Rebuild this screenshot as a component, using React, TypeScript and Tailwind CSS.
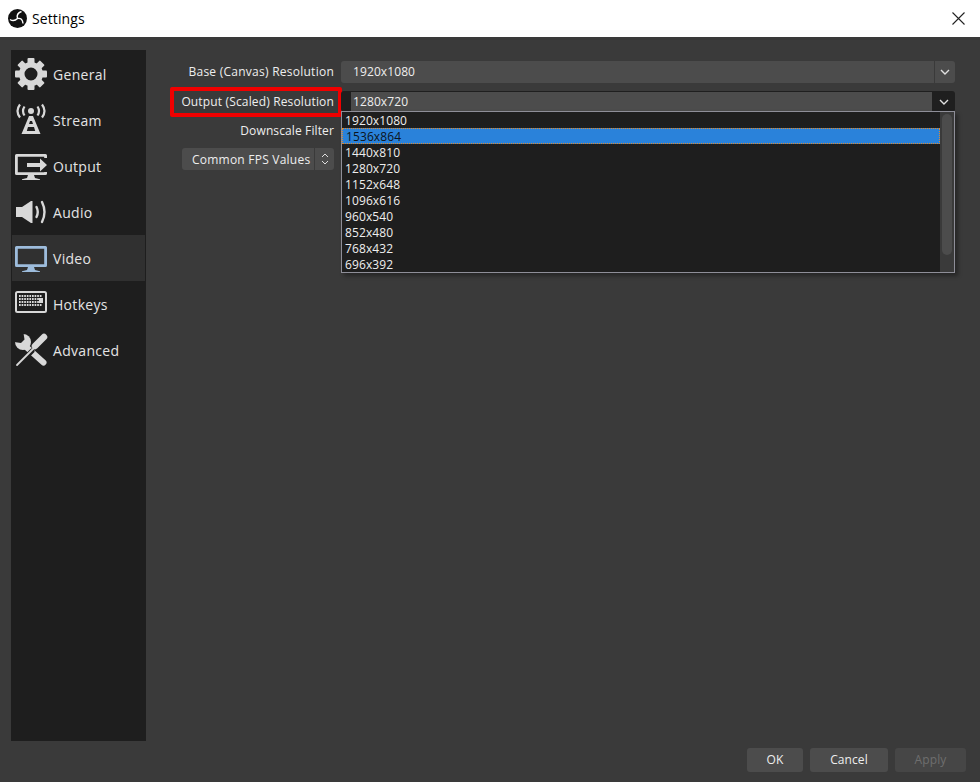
import type { ReactNode } from 'react';

const FONT = "font-['Open_Sans','Noto_Sans',sans-serif]";
const RESOLUTIONS = ['1920x1080', '1536x864', '1440x810', '1280x720', '1152x648', '1096x616', '960x540', '852x480', '768x432', '696x392'];

function Gear() {
  const teeth = [0, 45, 90, 135, 180, 225, 270, 315];
  return (
    <svg width="34" height="34" viewBox="0 0 34 34" fill="currentColor">
      {teeth.map((a) => (
        <rect key={a} x="13.5" y="1" width="7" height="8" rx="1" transform={`rotate(${a} 17 17)`} />
      ))}
      <path fillRule="evenodd" d="M17 5a12 12 0 1 0 0 24a12 12 0 0 0 0-24zM17 10.500a6.500 6.500 0 1 1 0 13a6.500 6.500 0 0 1 0-13z" />
    </svg>
  );
}

function Tower() {
  return (
    <svg width="34" height="34" viewBox="0 0 34 34" fill="none" stroke="currentColor">
      <circle cx="17" cy="8" r="3" fill="currentColor" stroke="none" />
      <path strokeWidth="2.200" d="M10.500 3.500q-3 4.500 0 9M6 1.500q-5 6.500 0 13M23.500 3.500q3 4.500 0 9M28 1.500q5 6.500 0 13" />
      <path fill="currentColor" stroke="none" fillRule="evenodd" d="M15 13h4l7.500 18h-19zM16 18l-1 3h4l-1-3zM14 24l-1.200 4h8.400l-1.200-4z" />
    </svg>
  );
}

function Monitor({ arrow }: { arrow?: boolean }) {
  return (
    <svg width="34" height="34" viewBox="0 0 34 34" fill="currentColor">
      <path fillRule="evenodd" d="M2.500 5h29a1.500 1.500 0 0 1 1.500 1.500v18a1.500 1.500 0 0 1-1.500 1.500h-29a1.500 1.500 0 0 1-1.500-1.500v-18a1.500 1.500 0 0 1 1.500-1.500zM3.800 7.800v15.400h26.400v-15.400z" />
      <path d="M14 26h6l1 3 5 1.200v.8h-18v-.8l5-1.200z" />
      {arrow && (
        <>
          <rect x="28" y="9" width="6" height="14" fill="#1e1e1e" />
          <path d="M13 14h13v-4.500l7 6.500-7 6.500v-4.500h-13z" />
        </>
      )}
    </svg>
  );
}

function Speaker() {
  return (
    <svg width="34" height="34" viewBox="0 0 34 34" fill="currentColor">
      <path d="M2 12h6l9-6h1.500v22h-1.500l-9-6h-6z" />
      <path fill="none" stroke="currentColor" strokeWidth="2.400" strokeLinecap="round" d="M22.500 12q2.500 5 0 10M28 7q5 10 0 20" />
    </svg>
  );
}

function Keyboard() {
  const keys: ReactNode[] = [];
  for (let r = 0; r < 4; r++) {
    for (let c = 0; c < 9; c++) {
      keys.push(<rect key={`${r}-${c}`} x={5 + c * 2.600} y={8 + r * 3} width="1.700" height="2" />);
    }
  }
  return (
    <svg width="34" height="34" viewBox="0 0 34 34" fill="currentColor">
      <rect x="2" y="5" width="30" height="20" rx="1.500" fill="none" stroke="currentColor" strokeWidth="2" />
      {keys}
      <rect x="25" y="11" width="4" height="5" />
    </svg>
  );
}

function Tools() {
  return (
    <svg width="34" height="34" viewBox="0 0 34 34" fill="none" stroke="currentColor" strokeLinecap="round">
      <path strokeWidth="6" d="M10 12l19.500 17.500" />
      <circle cx="9" cy="9" r="8" fill="currentColor" stroke="none" />
      <path fill="#1e1e1e" stroke="none" d="M0 0h9.500l1 6.500-3.500 3.500-7-1z" />
      <path stroke="#1e1e1e" strokeWidth="5" d="M18 18l-14 14" />
      <path strokeWidth="1.800" d="M20 15l-17 17" />
      <path strokeWidth="6.500" d="M21 13l9-9" />
    </svg>
  );
}

function ObsLogo() {
  return (
    <svg width="19" height="19" viewBox="0 0 19 19" fill="none">
      <circle cx="9.500" cy="9.500" r="9.500" fill="#111" />
      <path stroke="#fff" strokeWidth="1.400" d="M9.500 9.500q-1.500-5 4-7M9.500 9.500q5-1 5.500 5M9.500 9.500q-3.500 3.500-7.500 1" />
    </svg>
  );
}

function Chevron() {
  return (
    <svg width="10" height="6" viewBox="0 0 10 6" fill="none" stroke="#e0e0e0" strokeWidth="1.400">
      <path d="M1 1l4 4 4-4" />
    </svg>
  );
}

const NAV = [
  { label: 'General', icon: <Gear /> },
  { label: 'Stream', icon: <Tower /> },
  { label: 'Output', icon: <Monitor arrow /> },
  { label: 'Audio', icon: <Speaker /> },
  { label: 'Video', icon: <Monitor />, active: true },
  { label: 'Hotkeys', icon: <Keyboard /> },
  { label: 'Advanced', icon: <Tools /> },
];

export default function App() {
  return (
    <div className={`${FONT} flex h-[782px] w-[980px] flex-col overflow-hidden bg-[#3a3a3a] text-[12px] tracking-[0.1px] text-[#eeeeee]`}>
      {/* title bar */}
      <div className="flex h-[37px] items-center justify-between bg-white pl-2 pr-[15px] text-black">
        <div className="flex items-center gap-[5px]">
          <ObsLogo />
          <span className="text-[14px]">Settings</span>
        </div>
        <svg width="13" height="13" viewBox="0 0 13 13" stroke="#222" strokeWidth="1.100">
          <path d="M.500.500l12 12M12.500.500l-12 12" />
        </svg>
      </div>

      <div className="flex flex-1 px-[11px] pt-[13px]">
        {/* sidebar */}
        <div className="w-[135px] bg-[#1e1e1e] px-px pt-px">
          {NAV.map((n) => (
            <div
              key={n.label}
              className={`flex h-[46px] items-center gap-[5px] pl-[2px] text-[14px] tracking-[0.3px] ${n.active ? 'bg-[#303030] text-[#9dbcdc]' : 'text-[#d8d8d8]'}`}
            >
              <span className="flex h-[34px] w-[34px] items-center justify-center">{n.icon}</span>
              <span className="text-[#e4e4e4]">{n.label}</span>
            </div>
          ))}
        </div>

        {/* form */}
        <div className="grid h-fit grid-cols-[164px_614px] gap-x-[7px] gap-y-2 pl-6 pt-[11px]">
          <div className="flex h-[22px] items-center justify-end tracking-[0.25px]">Base (Canvas) Resolution</div>
          <div className="flex h-[22px] items-center rounded-[3px] bg-[#4c4c4c]">
            <span className="flex-1 pl-3">1920x1080</span>
            <span className="flex h-full w-[21px] items-center justify-center border-l border-[#3a3a3a]">
              <Chevron />
            </span>
          </div>

          <div className="relative flex h-[22px] items-center justify-end tracking-[0.15px]">
            <div className="absolute bottom-[-4px] left-0 right-[-8px] top-[-4px] rounded-[2px] border-[4px] border-[#f00000]" />
            Output (Scaled) Resolution
          </div>
          <div className="relative h-[22px]">
            <div className="flex h-[21px] items-center rounded-[3px] bg-[#1f1f1f] pl-[10px]">
              <span className="flex h-[19px] w-[581px] items-center bg-[#4c4c4c] pl-[2px]">1280x720</span>
              <span className="flex flex-1 items-center justify-center">
                <Chevron />
              </span>
            </div>
            {/* open dropdown */}
            <div className="absolute left-0 top-[20px] flex h-[162px] w-[614px] border border-[#8e8e98] bg-[#1e1e1e] shadow-[3px_3px_4px_rgba(0,0,0,0.35)]">
              <div className="flex-1">
                {RESOLUTIONS.map((r) => (
                  <div
                    key={r}
                    className={`flex h-4 items-center pl-[3px] pt-px ${r === '1536x864' ? 'border border-dotted border-[#e08a2c] bg-[#2a82da] pl-[2px] text-[#0c1420]' : ''}`}
                  >
                    {r}
                  </div>
                ))}
              </div>
              <div className="w-[14px] bg-[#3a3a3a] px-[2px] pt-[2px]">
                <div className="h-[141px] rounded-[5px] bg-[#4c4c4c]" />
              </div>
            </div>
          </div>

          <div className="flex h-[19px] items-center justify-end tracking-[0.12px]">Downscale Filter</div>
          <div className="h-[19px]" />

          <div className="ml-3 flex h-[22px] items-center rounded-[3px] bg-[#4c4c4c]">
            <span className="flex-1 pl-[10px] pt-px tracking-[0.23px]">Common FPS Values</span>
            <span className="flex h-full w-[20px] items-center justify-center border-l border-[#3a3a3a]">
              <svg width="8" height="14" viewBox="0 0 8 14" fill="none" stroke="#dddddd">
                <path d="M1 5l3-3 3 3M1 9l3 3 3-3" />
              </svg>
            </span>
          </div>
        </div>
      </div>

      {/* footer buttons */}
      <div className="flex h-[41px] justify-end gap-[7px] pr-[14px] pt-[7px]">
        <button className="h-6 w-14 rounded-[3px] bg-[#4c4c4c]">OK</button>
        <button className="h-6 w-[78px] rounded-[3px] bg-[#4c4c4c]">Cancel</button>
        <button className="h-6 w-[71px] rounded-[3px] bg-[#464646] text-[#6e6e6e]">Apply</button>
      </div>
    </div>
  );
}
